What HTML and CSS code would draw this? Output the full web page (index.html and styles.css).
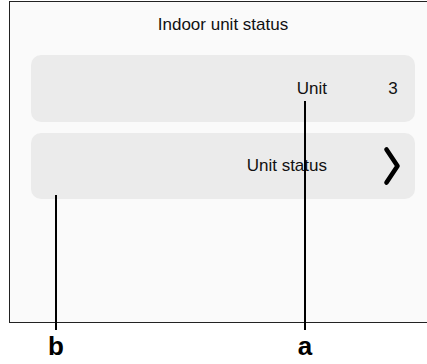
FILE: index.html
```html
<!DOCTYPE html>
<html lang="en">
<head>
  <meta charset="UTF-8">
  <meta name="viewport" content="width=device-width, initial-scale=1">
  <title>Indoor unit status</title>
  <link rel="stylesheet" href="styles.css">
</head>
<body>
  <div class="figure">
    <!-- Controller screen -->
    <div class="screen">
      <h1 class="title">Indoor unit status</h1>

      <div class="card">
        <span class="label">Unit</span>
        <span class="value">3</span>
      </div>

      <div class="card card-link">
        <span class="label">Unit status</span>
        <span class="value">
          <svg class="chevron" width="20" height="42" viewBox="0 0 20 42">
            <polyline points="4.5,4.5 15.5,21 4.5,37.5" fill="none" stroke="#000" stroke-width="4.6" stroke-linecap="round" stroke-linejoin="round"/>
          </svg>
        </span>
      </div>
    </div>

    <!-- Callout lines -->
    <div class="callout callout-a">
      <div class="callout-line"></div>
      <div class="callout-letter">a</div>
    </div>
    <div class="callout callout-b">
      <div class="callout-line"></div>
      <div class="callout-letter">b</div>
    </div>
  </div>
</body>
</html>
```

FILE: styles.css
```css
html,
body {
  margin: 0;
  padding: 0;
  background-color: #fff;
  overflow: hidden;
}

body {
  font-family: "Liberation Sans", Arial, sans-serif;
  color: #111;
}

.figure {
  position: relative;
  width: 427px;
  height: 364px;
  overflow: hidden;
}

.screen {
  margin: 1px 0 0 9px;
  width: 428px;
  height: 320px;
  box-sizing: content-box;
  border: 1px solid #222;
  border-right: none;
  background-color: #fafafa;
}

.title {
  margin: 13px 0 20px;
  font-size: 17px;
  font-weight: normal;
  line-height: 20px;
  text-align: center;
  padding-right: 2px;
}

.card {
  display: flex;
  align-items: center;
  justify-content: flex-end;
  gap: 44px;
  width: 384px;
  height: 67px;
  margin: 0 0 11px 21px;
  border-radius: 10px;
  background-color: #ebebeb;
  font-size: 17px;
}

.card-link {
  height: 66px;
}

.label {
  text-align: right;
}

.value {
  display: flex;
  justify-content: center;
  width: 44px;
}

.chevron {
  display: block;
  margin-left: -3px;
}

.callout {
  position: absolute;
  display: flex;
  flex-direction: column;
  align-items: center;
  width: 30px;
}

.callout-a {
  left: 290px;
  top: 101px;
}

.callout-a .callout-line {
  height: 229px;
}

.callout-b {
  left: 41px;
  top: 195px;
}

.callout-b .callout-line {
  height: 135px;
}

.callout-line {
  width: 2px;
  background-color: #000;
}

.callout-letter {
  margin-top: 3px;
  font-size: 26px;
  font-weight: bold;
  line-height: 26px;
  color: #000;
}
```
